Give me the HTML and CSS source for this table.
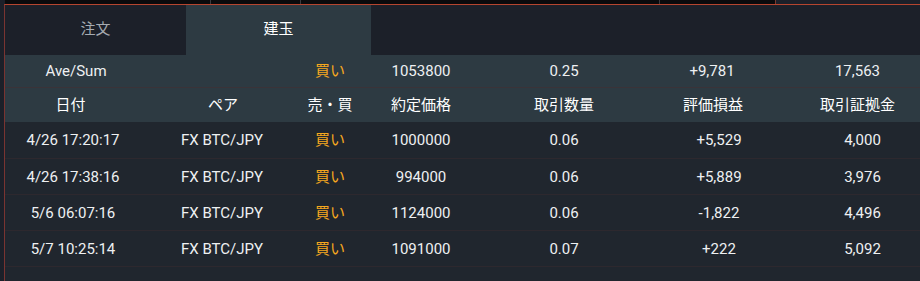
FILE: index.html
```html
<!DOCTYPE html>
<html lang="ja">
<head>
<meta charset="utf-8">
<link rel="stylesheet" href="styles.css">
</head>
<body>
<div class="screen">
  <div class="topstrip">
    <div class="ts-gap"></div>
    <div class="ts-seg ts-a"></div>
    <div class="ts-seg ts-b"></div>
    <div class="ts-seg ts-c"></div>
    <div class="ts-seg ts-d"></div>
    <div class="ts-rest"></div>
  </div>
  <div class="panel">
    <div class="tabs">
      <div class="tab">注文</div>
      <div class="tab active">建玉</div>
      <div class="tab-rest"></div>
    </div>
    <div class="row summary">
      <div class="cell">Ave/Sum</div>
      <div class="cell"></div>
      <div class="cell buy">買い</div>
      <div class="cell">1053800</div>
      <div class="cell">0.25</div>
      <div class="cell">+9,781</div>
      <div class="cell">17,563</div>
    </div>
    <div class="row head">
      <div class="cell">日付</div>
      <div class="cell">ペア</div>
      <div class="cell">売・買</div>
      <div class="cell">約定価格</div>
      <div class="cell">取引数量</div>
      <div class="cell">評価損益</div>
      <div class="cell">取引証拠金</div>
    </div>
    <div class="body">
      <div class="row data">
        <div class="cell">4/26 17:20:17</div>
        <div class="cell">FX BTC/JPY</div>
        <div class="cell buy">買い</div>
        <div class="cell">1000000</div>
        <div class="cell">0.06</div>
        <div class="cell sh">+5,529</div>
        <div class="cell sh">4,000</div>
      </div>
      <div class="row data">
        <div class="cell">4/26 17:38:16</div>
        <div class="cell">FX BTC/JPY</div>
        <div class="cell buy">買い</div>
        <div class="cell">994000</div>
        <div class="cell">0.06</div>
        <div class="cell sh">+5,889</div>
        <div class="cell sh">3,976</div>
      </div>
      <div class="row data">
        <div class="cell">5/6 06:07:16</div>
        <div class="cell">FX BTC/JPY</div>
        <div class="cell buy">買い</div>
        <div class="cell">1124000</div>
        <div class="cell">0.06</div>
        <div class="cell sh">-1,822</div>
        <div class="cell sh">4,496</div>
      </div>
      <div class="row data">
        <div class="cell">5/7 10:25:14</div>
        <div class="cell">FX BTC/JPY</div>
        <div class="cell buy">買い</div>
        <div class="cell">1091000</div>
        <div class="cell">0.07</div>
        <div class="cell sh">+222</div>
        <div class="cell sh">5,092</div>
      </div>
    </div>
  </div>
</div>
</body>
</html>
```

FILE: styles.css
```css
html, body {
  margin: 0;
  padding: 0;
  background: #1c2029;
  height: 100%;
  overflow: hidden;
}
body {
  font-family: Roboto, "Noto Sans CJK JP", sans-serif;
  font-size: 15px;
  color: #eef0f2;
}
.screen {
  display: flex;
  flex-direction: column;
  height: 281px;
}
.topstrip {
  display: flex;
  height: 4px;
  flex: none;
}
.ts-gap { width: 5px; background: #1c2029; }
.ts-seg { background: #0a0a0c; border-right: 1px solid #3a3a3e; }
.ts-a { width: 205px; }
.ts-b { width: 89px; }
.ts-c { width: 358px; }
.ts-d { width: 115px; border-right: 1px solid #7a3a30; }
.ts-rest { flex: 1; background: #1c2029; }
.panel {
  flex: 1;
  margin-left: 4px;
  border-top: 1px solid #b6452f;
  border-left: 1px solid #7a3431;
  background: #20262e;
  display: flex;
  flex-direction: column;
}
.tabs {
  display: flex;
  height: 50px;
  flex: none;
}
.tab {
  width: 181px;
  display: flex;
  align-items: center;
  justify-content: center;
  padding-bottom: 2px;
  box-sizing: border-box;
  line-height: 16px;
  background: #1c2029;
  color: #a6abb1;
}
.tab.active {
  width: 185px;
  background: #2d3a42;
  color: #ffffff;
}
.tab-rest { flex: 1; background: #1c2029; }
.row {
  display: grid;
  grid-template-columns: 136px 162px 54px 128px 158px 140px 137px;
  align-items: center;
}
.cell {
  text-align: center;
  white-space: nowrap;
  line-height: 16px;
}
.cell:last-child { padding-left: 12px; }
.summary {
  height: 32px;
  background: #2d3a42;
  border-bottom: 1px solid #3a3338;
}
.summary .cell:first-child { padding-left: 6px; }
.summary .cell:nth-child(6) { padding-right: 2px; }
.head {
  height: 34px;
  background: #2d3a42;
  color: #ffffff;
}
.head .cell:first-child { padding-right: 5px; }
.head .cell:nth-child(2) { padding-left: 2px; }
.data {
  height: 35px;
  border-bottom: 1px solid #2d282e;
}
.data:first-child { height: 36px; }
.data .sh { padding-left: 12px; }
.data .sh:last-child { padding-left: 22px; }
.buy { color: #f5a81e; }
.body {
  display: flex;
  flex-direction: column;
}
```
